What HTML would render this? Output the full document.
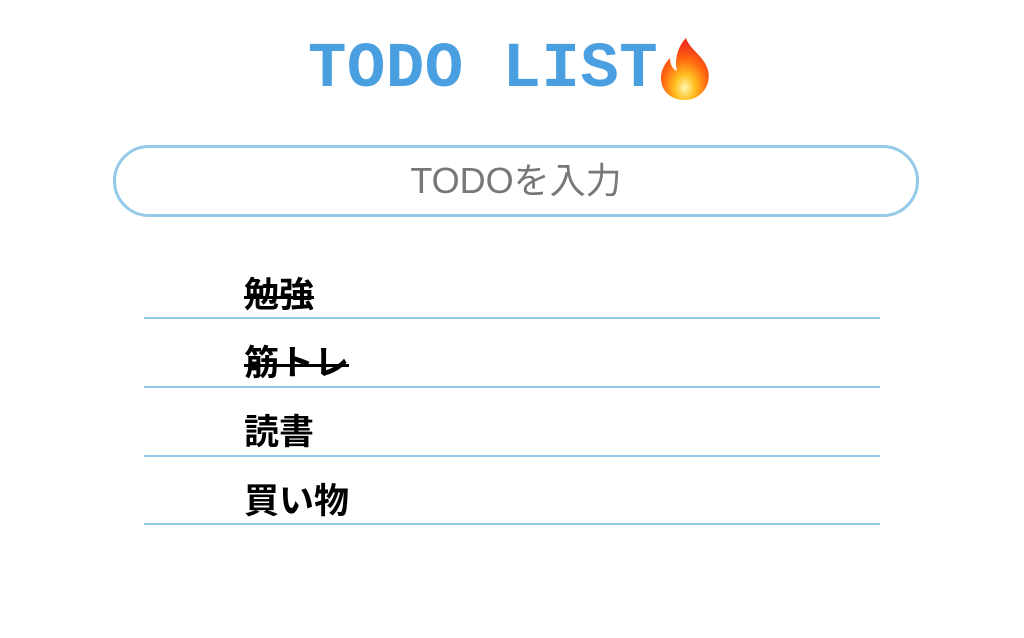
<!DOCTYPE html>
<html><head><meta charset="utf-8"><style>
body{margin:0;width:1024px;height:638px;background:#fff;position:relative;overflow:hidden;font-family:"Liberation Sans","Noto Sans CJK JP",sans-serif}
h1{position:absolute;left:308px;top:38px;margin:0;font:bold 64px/64px "Liberation Mono",monospace;color:#4a9fe0;letter-spacing:0.5px;white-space:nowrap}
.inp{position:absolute;left:113px;top:145px;width:800px;height:66px;border:3px solid #94c9e8;border-radius:36px;text-align:center;line-height:66px;font-size:36px;color:#777}
.row{position:absolute;left:144px;width:736px;height:2px;background:#94c9e8}
.t{position:absolute;left:244px;font-weight:bold;font-size:35px;line-height:40px;color:#000}
.s::after{content:"";position:absolute;left:0;right:0;top:20px;height:3px;background:#000}
</style></head><body>
<h1>TODO LIST</h1>
<svg style="position:absolute;left:656px;top:36px" width="58" height="66" viewBox="0 0 58 66">
<defs><radialGradient id="g" cx="0.5" cy="0.8" r="0.7"><stop offset="0" stop-color="#fff6b0"/><stop offset="0.3" stop-color="#ffc020"/><stop offset="0.65" stop-color="#ff6a10"/><stop offset="1" stop-color="#f0301a"/></radialGradient></defs>
<path d="M30 2C34 14 48 20 52 34C56 50 44 64 29 64C14 64 4 54 5 40C6 32 10 26 14 22C14 30 18 34 21 35C18 24 22 10 30 2Z" fill="url(#g)"/>
</svg>
<div class="inp">TODOを入力</div>
<div class="t s" style="top:276px">勉強</div>
<div class="row" style="top:317px"></div>
<div class="t s" style="top:344px">筋トレ</div>
<div class="row" style="top:386px"></div>
<div class="t" style="top:413px">読書</div>
<div class="row" style="top:455px"></div>
<div class="t" style="top:482px">買い物</div>
<div class="row" style="top:523px"></div>
</body></html>
